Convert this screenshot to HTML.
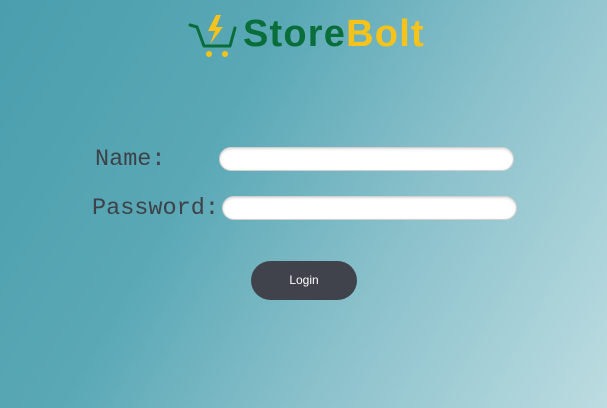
<!DOCTYPE html>
<html><head><style>
html,body{margin:0;padding:0}
body{width:607px;height:408px;overflow:hidden;position:relative;
background:linear-gradient(120deg,#4a9ead 0%,#5aa8b6 35%,#8cc2cc 65%,#bcdce1 100%);
font-family:"Liberation Sans",sans-serif}
.logo{position:absolute;left:243px;top:13px;font-weight:bold;font-size:38px;letter-spacing:1.2px;color:#0a6e3a}
.logo span{color:#f7c21a}
.lbl{position:absolute;font-family:"Liberation Mono",monospace;font-size:23.5px;color:#3e4148}
.inp{position:absolute;height:22px;background:#fff;border-radius:12px;border:1px solid #d0d0d0;box-shadow:inset 0 1px 2px rgba(0,0,0,.15)}
.btn{position:absolute;left:251px;top:261px;width:106px;height:39px;border-radius:20px;background:#40434b;color:#fff;font-size:12px;text-align:center;line-height:39px}
</style></head><body>
<svg style="position:absolute;left:188px;top:13px" width="50" height="48" viewBox="0 0 50 48">
<path d="M2 12 L9 14 L16 33 L42 33 L47 15" fill="none" stroke="#0a6e3a" stroke-width="3" stroke-linejoin="round" stroke-linecap="round"/>
<path d="M28 2 L20 18 L27 18 L22 31 L35 14 L28 14 L33 2 Z" fill="#f7c21a"/>
<circle cx="21" cy="41" r="3" fill="#f7c21a"/><circle cx="37" cy="41" r="3" fill="#f7c21a"/>
</svg>
<div class="logo">Store<span>Bolt</span></div>
<div class="lbl" style="left:95px;top:146px">Name:</div>
<div class="inp" style="left:219px;top:147px;width:293px"></div>
<div class="lbl" style="left:92px;top:195px">Password:</div>
<div class="inp" style="left:222px;top:196px;width:293px"></div>
<div class="btn">Login</div>
</body></html>
